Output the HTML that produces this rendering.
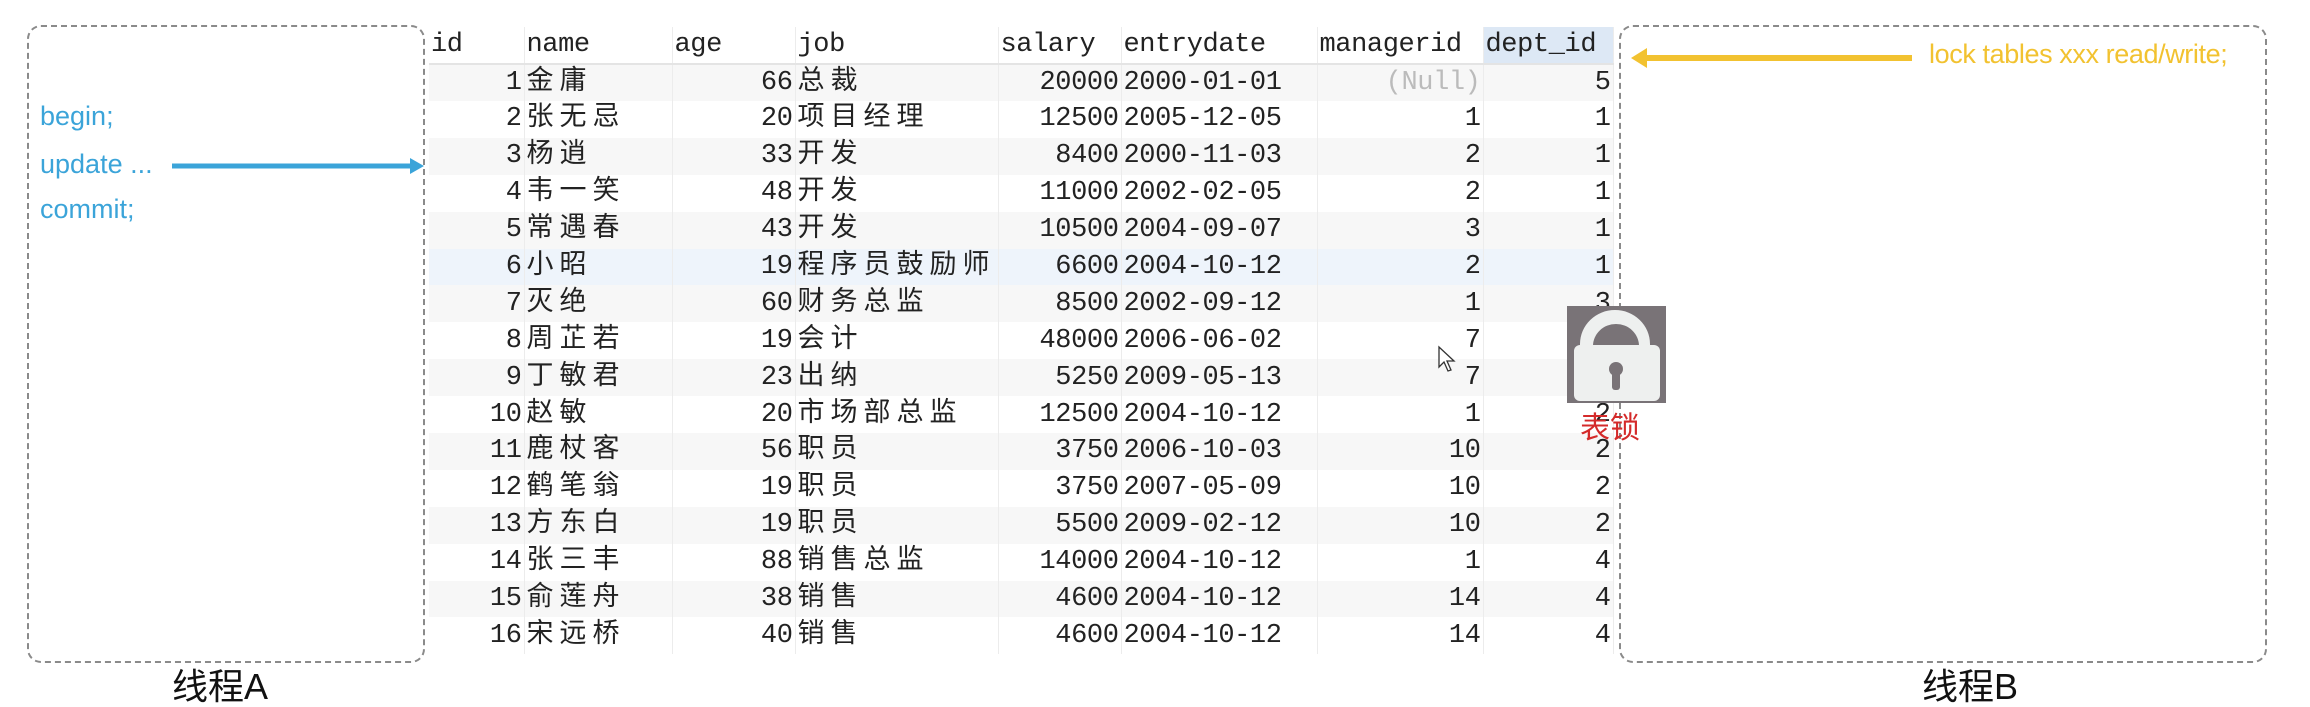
<!DOCTYPE html>
<html><head><meta charset="utf-8"><style>
*{margin:0;padding:0;box-sizing:border-box}
body{width:2310px;height:702px;background:#fff;position:relative;overflow:hidden;font-family:"Liberation Sans","Noto Sans CJK SC",sans-serif}
.box{position:absolute;border:2px dashed #8a8a8a;border-radius:14px}
table{position:absolute;left:429px;top:27px;border-collapse:collapse;font-family:"Liberation Mono","Noto Sans CJK SC",monospace;font-size:27px;color:#222;letter-spacing:-0.4px;table-layout:fixed}
td,th{height:36.9px;padding:0 2px;border-right:1px solid #ececec;white-space:nowrap;font-weight:normal;line-height:36px;overflow:visible}
th{text-align:left;border-bottom:2px solid #e4e4e4;height:36px}
td.r{text-align:right}
td.l{text-align:left}
tr:nth-child(even) td{background:#f7f7f7}
tr.sel td{background:#eef4fb !important}
.c{letter-spacing:6px}
.lt{position:absolute;color:#3ba4d9;font-size:27px;font-family:"Liberation Sans",sans-serif}
</style></head><body>
<div class="box" style="left:27px;top:25px;width:398px;height:638px"></div>
<div class="box" style="left:1619px;top:25px;width:648px;height:638px"></div>
<div class="lt" style="left:40px;top:101px">begin;</div>
<div class="lt" style="left:40px;top:149px">update ...</div>
<div class="lt" style="left:40px;top:194px">commit;</div>
<svg style="position:absolute;left:0;top:0" width="2310" height="702">
<line x1="172" y1="166" x2="412" y2="166" stroke="#3ba4d9" stroke-width="5"/>
<polygon points="410,158 424,166 410,174" fill="#3ba4d9"/>
<line x1="1645" y1="58" x2="1912" y2="58" stroke="#f2c230" stroke-width="6"/>
<polygon points="1647,48 1631,58 1647,68" fill="#f2c230"/>
</svg>
<table>
<colgroup><col style="width:95px"><col style="width:148px"><col style="width:123px"><col style="width:201px"><col style="width:123px"><col style="width:196px"><col style="width:166px"><col style="width:130px"></colgroup>
<tr><th>id</th><th>name</th><th>age</th><th>job</th><th>salary</th><th>entrydate</th><th>managerid</th><th style="background:#dde8f5">dept_id</th></tr>
<tr><td class="r">1</td><td class="l c">金庸</td><td class="r">66</td><td class="l c">总裁</td><td class="r">20000</td><td class="l">2000-01-01</td><td class="r" style="color:#bbb">(Null)</td><td class="r">5</td></tr>
<tr><td class="r">2</td><td class="l c">张无忌</td><td class="r">20</td><td class="l c">项目经理</td><td class="r">12500</td><td class="l">2005-12-05</td><td class="r">1</td><td class="r">1</td></tr>
<tr><td class="r">3</td><td class="l c">杨逍</td><td class="r">33</td><td class="l c">开发</td><td class="r">8400</td><td class="l">2000-11-03</td><td class="r">2</td><td class="r">1</td></tr>
<tr><td class="r">4</td><td class="l c">韦一笑</td><td class="r">48</td><td class="l c">开发</td><td class="r">11000</td><td class="l">2002-02-05</td><td class="r">2</td><td class="r">1</td></tr>
<tr><td class="r">5</td><td class="l c">常遇春</td><td class="r">43</td><td class="l c">开发</td><td class="r">10500</td><td class="l">2004-09-07</td><td class="r">3</td><td class="r">1</td></tr>
<tr class="sel"><td class="r">6</td><td class="l c">小昭</td><td class="r">19</td><td class="l c">程序员鼓励师</td><td class="r">6600</td><td class="l">2004-10-12</td><td class="r">2</td><td class="r">1</td></tr>
<tr><td class="r">7</td><td class="l c">灭绝</td><td class="r">60</td><td class="l c">财务总监</td><td class="r">8500</td><td class="l">2002-09-12</td><td class="r">1</td><td class="r">3</td></tr>
<tr><td class="r">8</td><td class="l c">周芷若</td><td class="r">19</td><td class="l c">会计</td><td class="r">48000</td><td class="l">2006-06-02</td><td class="r">7</td><td class="r">3</td></tr>
<tr><td class="r">9</td><td class="l c">丁敏君</td><td class="r">23</td><td class="l c">出纳</td><td class="r">5250</td><td class="l">2009-05-13</td><td class="r">7</td><td class="r">3</td></tr>
<tr><td class="r">10</td><td class="l c">赵敏</td><td class="r">20</td><td class="l c">市场部总监</td><td class="r">12500</td><td class="l">2004-10-12</td><td class="r">1</td><td class="r">2</td></tr>
<tr><td class="r">11</td><td class="l c">鹿杖客</td><td class="r">56</td><td class="l c">职员</td><td class="r">3750</td><td class="l">2006-10-03</td><td class="r">10</td><td class="r">2</td></tr>
<tr><td class="r">12</td><td class="l c">鹤笔翁</td><td class="r">19</td><td class="l c">职员</td><td class="r">3750</td><td class="l">2007-05-09</td><td class="r">10</td><td class="r">2</td></tr>
<tr><td class="r">13</td><td class="l c">方东白</td><td class="r">19</td><td class="l c">职员</td><td class="r">5500</td><td class="l">2009-02-12</td><td class="r">10</td><td class="r">2</td></tr>
<tr><td class="r">14</td><td class="l c">张三丰</td><td class="r">88</td><td class="l c">销售总监</td><td class="r">14000</td><td class="l">2004-10-12</td><td class="r">1</td><td class="r">4</td></tr>
<tr><td class="r">15</td><td class="l c">俞莲舟</td><td class="r">38</td><td class="l c">销售</td><td class="r">4600</td><td class="l">2004-10-12</td><td class="r">14</td><td class="r">4</td></tr>
<tr><td class="r">16</td><td class="l c">宋远桥</td><td class="r">40</td><td class="l c">销售</td><td class="r">4600</td><td class="l">2004-10-12</td><td class="r">14</td><td class="r">4</td></tr>
</table>
<svg style="position:absolute;left:1567px;top:306px" width="99" height="97">
<rect width="99" height="97" fill="#797377"/>
<path d="M13 45 V38 A35 34 0 0 1 83 38 V45 H72 V40 A23 22 0 0 0 26 40 V45 Z" fill="#eef0ef"/>
<rect x="7" y="39" width="86" height="56" rx="6" fill="#eef0ef"/>
<circle cx="49" cy="63" r="7" fill="#797377"/>
<rect x="45" y="63" width="8" height="21" rx="3" fill="#797377"/>
</svg>
<div style="position:absolute;left:1580px;top:406px;font-size:30px;color:#d42a2a;font-family:'Noto Sans CJK SC',sans-serif;line-height:38px">表锁</div>
<svg style="position:absolute;left:1437px;top:345px" width="20" height="30"><path d="M2 2 L2 22 L7 17 L11 26 L14 25 L10 16 L17 16 Z" fill="#fff" stroke="#333" stroke-width="1.3"/></svg>
<div style="position:absolute;left:1929px;top:39px;font-size:27px;color:#f2c230;letter-spacing:-0.4px">lock tables xxx read/write;</div>
<div style="position:absolute;left:172px;top:667px;font-size:36px;color:#111;line-height:40px">线程A</div>
<div style="position:absolute;left:1922px;top:667px;font-size:36px;color:#111;line-height:40px">线程B</div>
</body></html>
